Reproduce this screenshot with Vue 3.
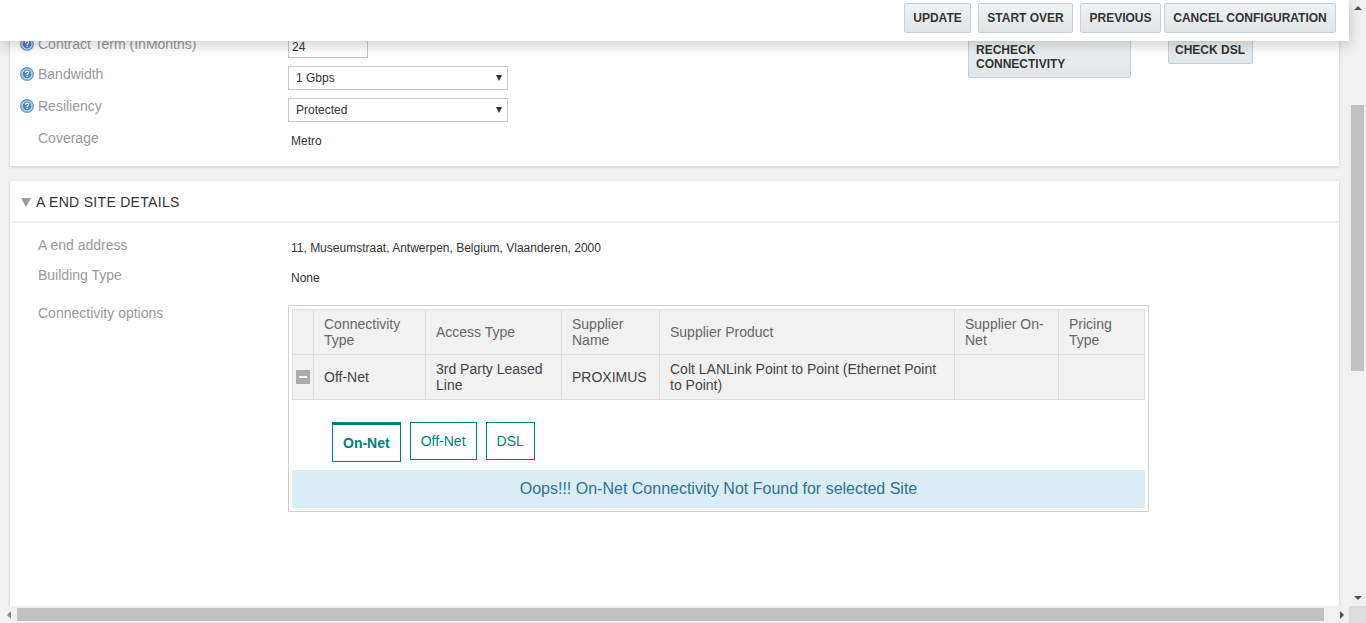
<template>
  <div class="screen">
    <div class="viewport">
      <div class="page">
        <section class="panel top-panel">
          <div class="form">
            <div v-for="row in topRows" :key="row.label" class="form-row">
              <span class="help">
                <svg v-if="row.help" width="14" height="14" viewBox="0 0 14 14">
                  <circle cx="7" cy="7" r="7" fill="#6f99cb" />
                  <circle cx="7" cy="7" r="5.6" fill="#c6d9ef" />
                  <circle cx="7" cy="7" r="4.4" fill="#4d80bd" />
                  <path d="M5.4 5.7c0-1 .8-1.6 1.7-1.6s1.6.6 1.6 1.4c0 1.2-1.6 1.2-1.6 2.4" fill="none" stroke="#fff" stroke-width="1.2" />
                  <rect x="6.5" y="8.7" width="1.2" height="1.2" fill="#fff" />
                </svg>
              </span>
              <span class="label">{{ row.label }}</span>
              <input v-if="row.type === 'input'" class="term" :value="row.value" readonly />
              <div v-else-if="row.type === 'select'" class="select">
                <span>{{ row.value }}</span>
                <i class="caret"></i>
              </div>
              <span v-else class="value">{{ row.value }}</span>
            </div>
          </div>
          <div class="checks">
            <button class="btn recheck">RECHECK CONNECTIVITY</button>
            <button class="btn dsl">CHECK DSL</button>
          </div>
        </section>

        <section class="panel site-panel">
          <h2 class="site-title"><i class="toggle"></i>A END SITE DETAILS</h2>
          <div class="site-body">
            <div class="info-row first">
              <span class="label">A end address</span>
              <span class="value">11, Museumstraat, Antwerpen, Belgium, Vlaanderen, 2000</span>
            </div>
            <div class="info-row">
              <span class="label">Building Type</span>
              <span class="value">None</span>
            </div>
            <div class="options-row">
              <span class="label">Connectivity options</span>
              <div class="options-box">
                <table class="options">
                  <colgroup>
                    <col v-for="w in colWidths" :key="w" :style="{ width: w + 'px' }" />
                  </colgroup>
                  <thead>
                    <tr>
                      <th></th>
                      <th v-for="h in headers" :key="h">{{ h }}</th>
                    </tr>
                  </thead>
                  <tbody>
                    <tr>
                      <td class="minus-cell"><span class="minus"></span></td>
                      <td v-for="(c, i) in cells" :key="i">{{ c }}</td>
                    </tr>
                  </tbody>
                </table>
                <div class="tabs">
                  <a v-for="t in tabs" :key="t" class="tab" :class="{ active: t === activeTab }">{{ t }}</a>
                </div>
                <div class="alert">Oops!!! On-Net Connectivity Not Found for selected Site</div>
              </div>
            </div>
          </div>
        </section>
      </div>

      <header class="topbar">
        <button class="btn update">UPDATE</button>
        <button class="btn over">START OVER</button>
        <button class="btn prev">PREVIOUS</button>
        <button class="btn cancel">CANCEL CONFIGURATION</button>
      </header>

      <div class="vscroll">
        <i class="arrow up"></i>
        <div class="vtrack"><div class="vthumb"></div></div>
        <i class="arrow down"></i>
      </div>
    </div>
    <div class="hscroll">
      <i class="arrow left"></i>
      <div class="htrack"><div class="hthumb"></div></div>
      <i class="arrow right"></i>
      <div class="corner"></div>
    </div>
  </div>
</template>

<script setup>
import { ref } from 'vue'

const topRows = [
  { label: 'Contract Term (InMonths)', type: 'input', value: '24', help: true },
  { label: 'Bandwidth', type: 'select', value: '1 Gbps', help: true },
  { label: 'Resiliency', type: 'select', value: 'Protected', help: true },
  { label: 'Coverage', type: 'text', value: 'Metro', help: false }
]

const colWidths = [21, 112, 136, 98, 295, 104, 86]
const headers = ['Connectivity Type', 'Access Type', 'Supplier Name', 'Supplier Product', 'Supplier On-Net', 'Pricing Type']
const cells = ['Off-Net', '3rd Party Leased Line', 'PROXIMUS', 'Colt LANLink Point to Point (Ethernet Point to Point)', '', '']

const tabs = ['On-Net', 'Off-Net', 'DSL']
const activeTab = ref('On-Net')
</script>

<style>
html, body {
  margin: 0;
  overflow: hidden;
}
</style>

<style scoped>
.screen {
  width: 1366px;
  height: 623px;
  display: flex;
  flex-direction: column;
  overflow: hidden;
  background: #f1f1f1;
  font-family: "Liberation Sans", Arial, sans-serif;
}
.viewport {
  position: relative;
  flex: 1;
  min-height: 0;
  display: flex;
  overflow: hidden;
}
.page {
  flex: 1;
  min-width: 0;
  padding: 0 10px;
}
.panel {
  background: #fff;
  box-shadow: 0 1px 3px rgba(0, 0, 0, 0.18);
}
.top-panel {
  height: 166px;
  box-sizing: border-box;
  padding: 34px 0 0 10px;
  display: flex;
}
.form {
  width: 948px;
}
.form-row {
  display: flex;
  align-items: flex-start;
  height: 24px;
  margin-bottom: 8px;
}
.form-row:first-child {
  margin-top: 2px;
  height: 22px;
}
.help {
  width: 18px;
  height: 14px;
  flex: none;
  margin-top: 1px;
}
.help svg {
  display: block;
}
.label {
  font-size: 14px;
  line-height: 16px;
  color: #999;
}
.form-row .label {
  width: 250px;
  flex: none;
}
.term {
  width: 80px;
  height: 22px;
  box-sizing: border-box;
  border: 1px solid #c8c8c8;
  padding: 0 3px;
  font: 12px "Liberation Sans", Arial, sans-serif;
  color: #333;
  outline: none;
}
.select {
  width: 220px;
  height: 24px;
  box-sizing: border-box;
  border: 1px solid #c8c8c8;
  padding: 0 7px;
  display: flex;
  align-items: center;
  justify-content: space-between;
  font-size: 12px;
  color: #333;
}
.caret {
  width: 0;
  height: 0;
  border-left: 3px solid transparent;
  border-right: 3px solid transparent;
  border-top: 6px solid #333;
  margin-right: -2px;
}
.value {
  font-size: 12px;
  line-height: 16px;
  color: #333;
}
.form-row .value {
  margin: 3px 0 0 3px;
}
.checks {
  display: flex;
  align-items: flex-start;
  gap: 37px;
  margin-top: 1px;
}
.btn {
  box-sizing: border-box;
  border: 1px solid #c6d0d8;
  border-radius: 2px;
  background: linear-gradient(#f0f3f5, #e1e5e8);
  padding: 7px 7px 6px;
  font: bold 12px/14px "Liberation Sans", Arial, sans-serif;
  color: #333;
  text-align: left;
}
.recheck {
  width: 163px;
}
.dsl {
  width: 85px;
  padding-left: 6px;
  padding-right: 6px;
}
.site-panel {
  margin-top: 15px;
  height: 600px;
}
.site-title {
  margin: 0;
  height: 42px;
  box-sizing: border-box;
  border-bottom: 2px solid #eee;
  padding: 2px 0 0 11px;
  display: flex;
  align-items: center;
  font-size: 14px;
  font-weight: normal;
  letter-spacing: 0.3px;
  color: #333;
}
.toggle {
  width: 0;
  height: 0;
  border-left: 5px solid transparent;
  border-right: 5px solid transparent;
  border-top: 9px solid #9c9c9c;
  margin-right: 5px;
}
.site-body {
  padding: 14px 0 0 28px;
}
.info-row {
  display: flex;
  height: 30px;
}
.info-row .label {
  width: 250px;
}
.info-row .value {
  margin: 3px 0 0 3px;
}
.options-row {
  display: flex;
  margin-top: 8px;
}
.options-row .label {
  width: 250px;
}
.options-box {
  width: 861px;
  height: 207px;
  box-sizing: border-box;
  border: 1px solid #d8cdd2;
  padding: 3px;
}
.options {
  width: 853px;
  table-layout: fixed;
  border-collapse: collapse;
  font-size: 14px;
  line-height: 16px;
}
.options th,
.options td {
  height: 45px;
  box-sizing: border-box;
  border: 1px solid #ddd;
  background: #f1f1f1;
  padding: 0 10px;
  font-weight: normal;
  text-align: left;
  color: #444;
}
.options th {
  color: #666;
}
.options .minus-cell {
  padding: 0 3px;
}
.minus {
  display: flex;
  width: 14px;
  height: 14px;
  align-items: center;
  justify-content: center;
  background: #ababab;
}
.minus::before {
  content: "";
  width: 8px;
  height: 2px;
  background: #fff;
}
.tabs {
  display: flex;
  align-items: flex-start;
  gap: 9px;
  margin: 22px 0 8px 40px;
  height: 40px;
}
.tab {
  box-sizing: border-box;
  height: 38px;
  padding: 0 10px;
  border: 1px solid #00807a;
  font-size: 14px;
  line-height: 36px;
  color: #00807a;
}
.tab.active {
  height: 40px;
  border-top-width: 3px;
  font-weight: bold;
  line-height: 36px;
}
.alert {
  height: 38px;
  background: #d9edf7;
  color: #31708f;
  font-size: 16px;
  line-height: 38px;
  text-align: center;
}
.topbar {
  position: absolute;
  top: 0;
  left: 0;
  right: 17px;
  height: 41px;
  box-sizing: border-box;
  background: #fff;
  box-shadow: 0 3px 14px rgba(0, 0, 0, 0.22);
  padding: 3px 13px 0 0;
  display: flex;
  justify-content: flex-end;
  align-items: flex-start;
  gap: 7px;
}
.topbar .btn {
  height: 30px;
  padding: 0;
  text-align: center;
}
.update { width: 67px; }
.over { width: 95px; }
.prev { width: 81px; margin-right: -4px; }
.cancel { width: 172px; }
.vscroll {
  width: 17px;
  flex: none;
  display: flex;
  flex-direction: column;
  align-items: center;
  background: #f1f1f1;
}
.vtrack {
  flex: 1;
  width: 100%;
  position: relative;
}
.vthumb {
  position: absolute;
  top: 90px;
  left: 2px;
  width: 13px;
  height: 266px;
  background: #c1c1c1;
}
.arrow {
  flex: none;
  width: 0;
  height: 0;
}
.arrow.up {
  margin: 6px 0 5px;
  border-left: 4px solid transparent;
  border-right: 4px solid transparent;
  border-bottom: 4px solid #505050;
}
.arrow.down {
  margin: 5px 0 6px;
  border-left: 4px solid transparent;
  border-right: 4px solid transparent;
  border-top: 4px solid #505050;
}
.hscroll {
  height: 17px;
  flex: none;
  display: flex;
  align-items: center;
  background: #f1f1f1;
}
.htrack {
  flex: 1;
  height: 100%;
  position: relative;
}
.hthumb {
  position: absolute;
  left: 0;
  top: 2px;
  width: 1307px;
  height: 13px;
  background: #c1c1c1;
}
.arrow.left {
  margin: 0 6px 0 7px;
  border-top: 4px solid transparent;
  border-bottom: 4px solid transparent;
  border-right: 4px solid #8a8a8a;
}
.arrow.right {
  margin: 0 5px 0 6px;
  border-top: 4px solid transparent;
  border-bottom: 4px solid transparent;
  border-left: 4px solid #505050;
}
.corner {
  width: 17px;
  height: 17px;
  flex: none;
  background: #dcdcdc;
}
</style>
